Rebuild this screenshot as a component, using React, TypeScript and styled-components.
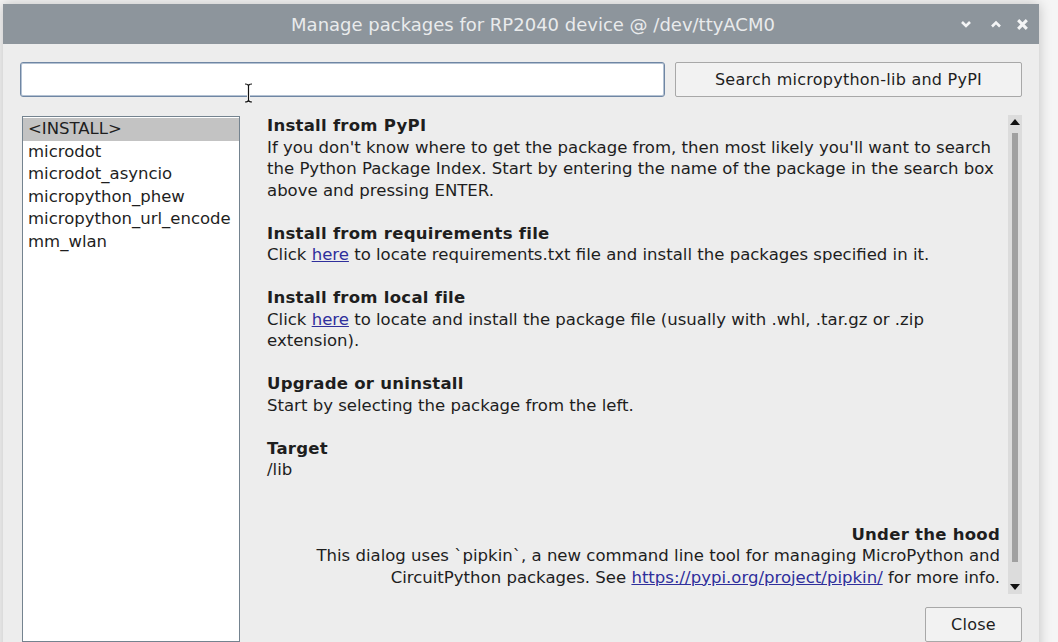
import React from "react";
import styled, { createGlobalStyle } from "styled-components";

const GlobalStyle = createGlobalStyle`
  html, body { margin: 0; padding: 0; }
  body {
    background: #f5f5f5;
    font-family: "DejaVu Sans", "Noto Sans", sans-serif;
    overflow: hidden;
  }
`;

const Desktop = styled.div`
  position: relative;
  width: 1058px;
  height: 642px;
  box-sizing: border-box;
  padding: 4px 0 0 3px;
  overflow: hidden;
`;

const Window = styled.div`
  width: 1036px;
  height: 660px;
  background: #ededed;
  box-shadow: 0 0 12px rgba(0, 0, 0, 0.22);
  display: flex;
  flex-direction: column;
`;

const TitleBar = styled.div`
  height: 40px;
  flex: none;
  background: #8d959c;
  display: grid;
  grid-template-columns: 1fr auto 1fr;
  align-items: center;
`;

const Title = styled.div`
  grid-column: 2;
  color: #e9ebec;
  font-size: 18px;
  padding-left: 24px;
  white-space: nowrap;
`;

const Controls = styled.div`
  grid-column: 3;
  justify-self: end;
  display: flex;
  align-items: center;
  padding-right: 9px;
`;

const ControlBox = styled.div<{ $gap: number }>`
  width: 16px;
  height: 16px;
  margin-left: ${(p) => p.$gap}px;
  display: flex;
  align-items: center;
  justify-content: center;
`;

const Content = styled.div`
  padding: 18px 17px 0 17px;
  display: flex;
  flex-direction: column;
`;

const SearchRow = styled.div`
  display: flex;
  gap: 10px;
  height: 35px;
`;

const SearchInput = styled.div`
  width: 645px;
  flex: none;
  box-sizing: border-box;
  background: #ffffff;
  border: 1px solid #6f86a3;
  box-shadow: inset 0 0 0 1px #b4c2d3;
  border-radius: 3px;
`;

const PushButton = styled.div<{ $width?: number }>`
  box-sizing: border-box;
  ${(p) => (p.$width ? `width: ${p.$width}px; flex: none;` : "flex: 1;")}
  height: 35px;
  background: #f2f2f2;
  border: 1px solid #a8a8a8;
  border-radius: 2px;
  display: flex;
  align-items: center;
  justify-content: center;
  font-size: 16px;
  letter-spacing: 0.25px;
  color: #1e1e1e;
  white-space: nowrap;
`;

const Main = styled.div`
  margin-top: 18px;
  padding-left: 2px;
  display: grid;
  grid-template-columns: 218px 1fr;
  grid-template-rows: 479px 35px;
  row-gap: 13px;
`;

const ListBox = styled.div`
  grid-row: 1 / 3;
  margin-top: 1px;
  box-sizing: border-box;
  height: 526px;
  background: #ffffff;
  border: 1px solid #74838f;
  padding: 1px 0;
  display: flex;
  flex-direction: column;
`;

const ListItem = styled.div<{ $selected?: boolean }>`
  height: 22.5px;
  line-height: 22.5px;
  padding-left: 5px;
  font-size: 16.5px;
  color: #1e1e1e;
  white-space: nowrap;
  background: ${(p) => (p.$selected ? "#c3c3c3" : "transparent")};
`;

const InfoPane = styled.div`
  grid-column: 2;
  grid-row: 1;
  display: flex;
  gap: 8px;
  padding-left: 27px;
`;

const InfoText = styled.div`
  flex: 1;
  font-size: 16.55px;
  line-height: 21.5px;
  color: #1e1e1e;
`;

const Section = styled.div<{ $right?: boolean; $top?: number }>`
  margin-top: ${(p) => p.$top ?? 0}px;
  text-align: ${(p) => (p.$right ? "right" : "left")};
`;

const Heading = styled.div`
  font-weight: bold;
  letter-spacing: 0.25px;
`;

const Link = styled.span`
  color: #2f2f9c;
  text-decoration: underline;
`;

const Scrollbar = styled.div`
  width: 14px;
  flex: none;
  background: #dcdcdc;
  display: flex;
  flex-direction: column;
`;

const ArrowBox = styled.div`
  height: 14px;
  flex: none;
  display: flex;
  align-items: center;
  justify-content: center;
`;

const Thumb = styled.div`
  margin: 4px 0 0 4px;
  width: 6px;
  height: 429px;
  background: #a0a0a0;
  flex: none;
`;

const Spacer = styled.div`
  flex: 1;
`;

const ButtonRow = styled.div`
  grid-column: 2;
  grid-row: 2;
  display: flex;
  justify-content: flex-end;
`;

const Cursor = styled.svg`
  position: absolute;
  left: 243px;
  top: 83px;
`;

const Chevron = ({ up }: { up?: boolean }) => (
  <svg width="12" height="8" viewBox="0 0 12 8">
    <path
      d={up ? "M2 6.5 L6 2.5 L10 6.5" : "M2 2 L6 6 L10 2"}
      fill="none"
      stroke="#f4f5f6"
      strokeWidth="2.6"
    />
  </svg>
);

const CloseX = () => (
  <svg width="13" height="13" viewBox="0 0 12 12">
    <path d="M2 2 L10 10 M10 2 L2 10" stroke="#f4f5f6" strokeWidth="2.8" />
  </svg>
);

const Triangle = ({ up }: { up?: boolean }) => (
  <svg width="10" height="6" viewBox="0 0 10 6">
    <path d={up ? "M0 6 L5 0 L10 6 Z" : "M0 0 L10 0 L5 6 Z"} fill="#111" />
  </svg>
);

const packages = [
  "<INSTALL>",
  "microdot",
  "microdot_asyncio",
  "micropython_phew",
  "micropython_url_encode",
  "mm_wlan",
];

export default function App() {
  return (
    <>
      <GlobalStyle />
      <Desktop>
        <Window>
          <TitleBar>
            <Title>Manage packages for RP2040 device @ /dev/ttyACM0</Title>
            <Controls>
              <ControlBox $gap={0}>
                <Chevron />
              </ControlBox>
              <ControlBox $gap={14}>
                <Chevron up />
              </ControlBox>
              <ControlBox $gap={10}>
                <CloseX />
              </ControlBox>
            </Controls>
          </TitleBar>
          <Content>
            <SearchRow>
              <SearchInput />
              <PushButton>Search micropython-lib and PyPI</PushButton>
            </SearchRow>
            <Main>
              <ListBox>
                {packages.map((p, i) => (
                  <ListItem key={p} $selected={i === 0}>
                    {p}
                  </ListItem>
                ))}
              </ListBox>
              <InfoPane>
                <InfoText>
                  <Section>
                    <Heading>Install from PyPI</Heading>
                    If you don't know where to get the package from, then most likely you'll want to
                    search the Python Package Index. Start by entering the name of the package in the
                    search box above and pressing ENTER.
                  </Section>
                  <Section $top={21.5}>
                    <Heading>Install from requirements file</Heading>
                    Click <Link>here</Link> to locate requirements.txt file and install the packages
                    specified in it.
                  </Section>
                  <Section $top={21.5}>
                    <Heading>Install from local file</Heading>
                    Click <Link>here</Link> to locate and install the package file (usually with .whl,
                    .tar.gz or .zip extension).
                  </Section>
                  <Section $top={21.5}>
                    <Heading>Upgrade or uninstall</Heading>
                    Start by selecting the package from the left.
                  </Section>
                  <Section $top={21.5}>
                    <Heading>Target</Heading>
                    /lib
                  </Section>
                  <Section $right $top={43}>
                    <Heading>Under the hood</Heading>
                    This dialog uses `pipkin`, a new command line tool for managing MicroPython and
                    CircuitPython packages. See <Link>https://pypi.org/project/pipkin/</Link> for more
                    info.
                  </Section>
                </InfoText>
                <Scrollbar>
                  <ArrowBox>
                    <Triangle up />
                  </ArrowBox>
                  <Thumb />
                  <Spacer />
                  <ArrowBox>
                    <Triangle />
                  </ArrowBox>
                </Scrollbar>
              </InfoPane>
              <ButtonRow>
                <PushButton $width={97}>Close</PushButton>
              </ButtonRow>
            </Main>
          </Content>
        </Window>
        <Cursor width="11" height="20" viewBox="0 0 11 20">
          <path
            d="M2 1 Q5.5 1 5.5 3 Q5.5 1 9 1 M5.5 3 L5.5 17 M2 19 Q5.5 19 5.5 17 Q5.5 19 9 19"
            fill="none"
            stroke="#ffffff"
            strokeWidth="3"
          />
          <path
            d="M2 1 Q5.5 1 5.5 3 Q5.5 1 9 1 M5.5 3 L5.5 17 M2 19 Q5.5 19 5.5 17 Q5.5 19 9 19"
            fill="none"
            stroke="#111111"
            strokeWidth="1.2"
          />
        </Cursor>
      </Desktop>
    </>
  );
}
